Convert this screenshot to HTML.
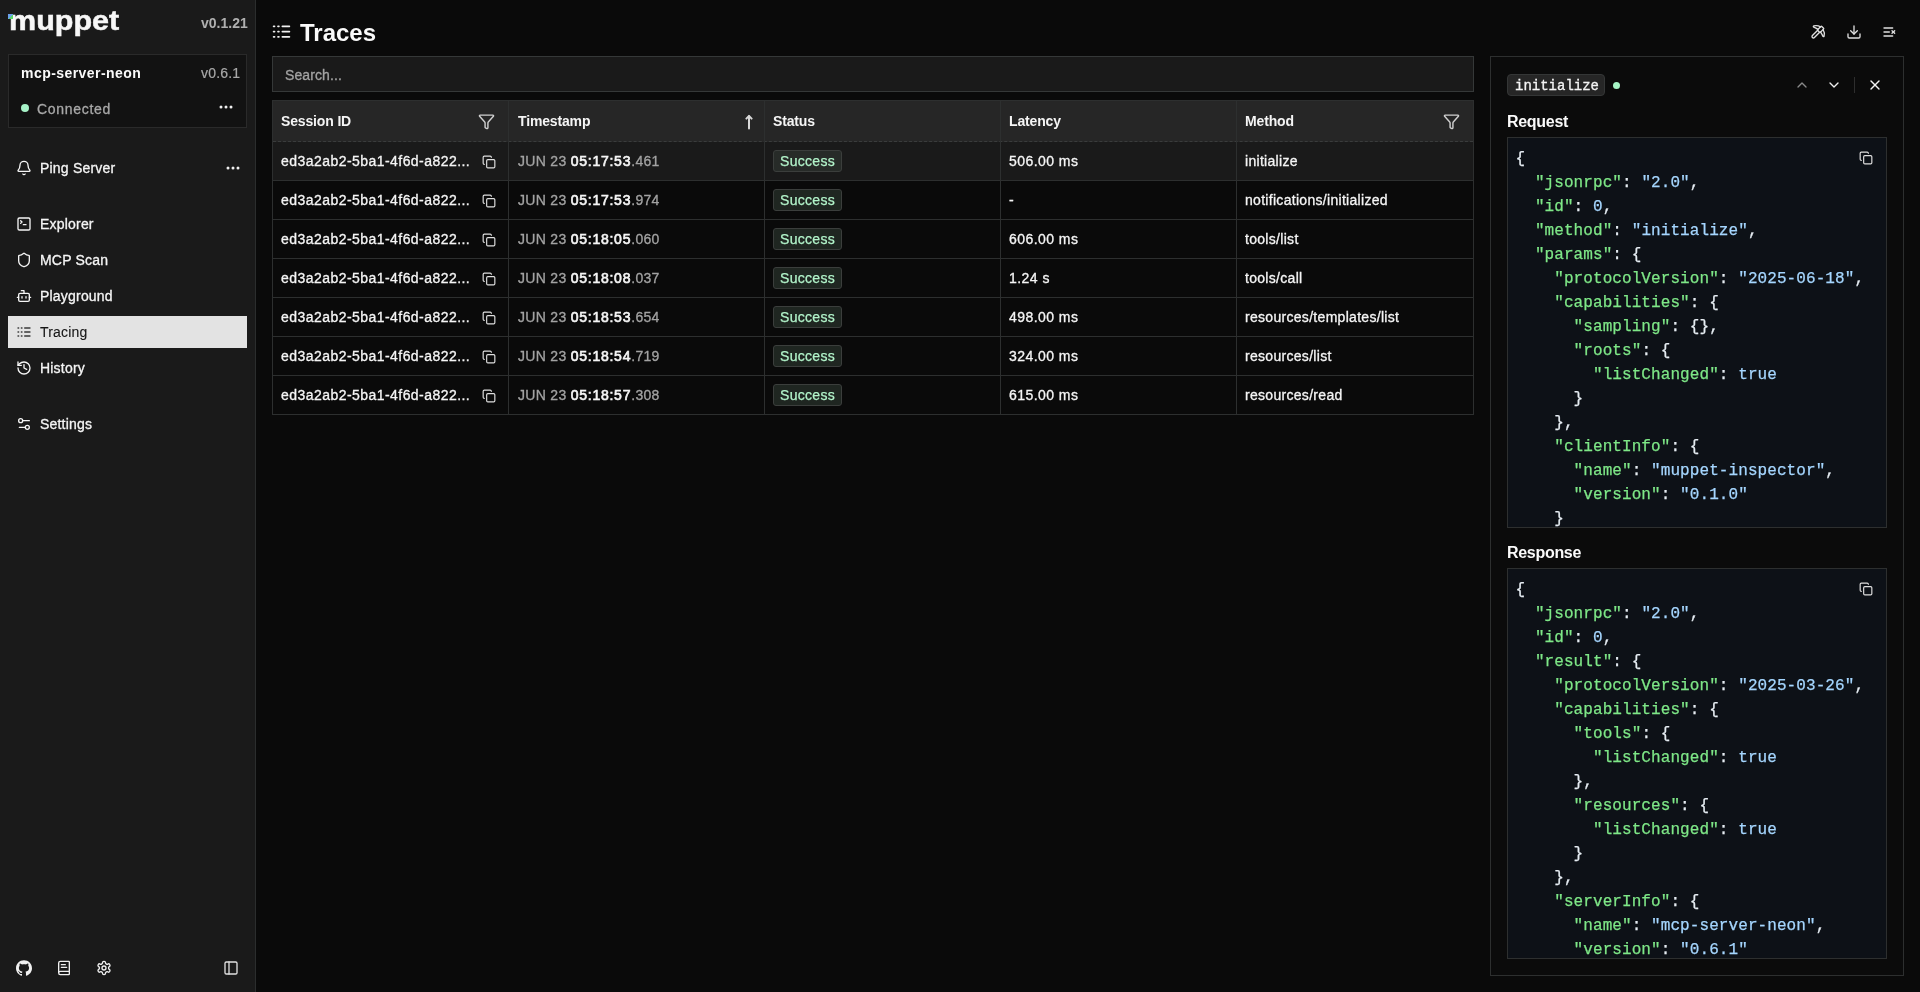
<!DOCTYPE html><html><head><meta charset="utf-8"><style>
*{box-sizing:border-box;margin:0;padding:0}
html,body{width:1920px;height:992px;overflow:hidden;background:#0a0a0a;font-family:"Liberation Sans",sans-serif;color:#f5f5f5}
.a{position:absolute}
svg.i{position:absolute;fill:none;stroke:currentColor;stroke-width:2;stroke-linecap:round;stroke-linejoin:round}
#side{position:absolute;left:0;top:0;width:256px;height:992px;background:#1a1a1a;border-right:1px solid #2b2d2d}
.logo{position:absolute;left:9px;top:6px;font-size:27px;font-weight:bold;letter-spacing:0px;color:#f7f7f7;transform-origin:0 0;transform:scaleX(1.13);-webkit-text-stroke:0.5px #f7f7f7}
.ver{position:absolute;left:201px;top:15px;font-size:14px;font-weight:bold;color:#b0b0b0}
.card{position:absolute;left:8px;top:54px;width:239px;height:74px;background:#121212;border:1px solid #2a2a2a}
.nav{position:absolute;left:8px;width:239px;height:32px;font-size:14px;color:#f5f5f5}
.nav .t{position:absolute;left:32px;top:8px;letter-spacing:0.2px;-webkit-text-stroke:0.3px currentColor}
.nav svg.i{left:8px;top:8px;width:16px;height:16px}
.nav.act{background:#e3e3e3;color:#161616}
.nav.act .t{-webkit-text-stroke:0.1px currentColor}
.nav.act svg.i{color:#3a3a3a}
.row.sel .badge{background:#272b28}
.search{position:absolute;left:272px;top:56px;width:1202px;height:36px;background:#1a1a1a;border:1px solid #353838;font-size:14px;color:#a3a3a3;padding:10px 12px;letter-spacing:0.1px;-webkit-text-stroke:0.3px currentColor}
.tbl{position:absolute;left:272px;top:100px;width:1202px;height:315px;border:1px solid #2d2f2f;font-size:14px}
.hdr{position:absolute;left:0;top:0;width:1200px;height:41px;background:#262626;border-bottom:1px dashed #3a3c3c}
.row{position:absolute;left:0;width:1200px;height:39px;border-bottom:1px solid #2d2f2f}
.row.sel{background:#1a1a1a}
.c{position:absolute;top:0;height:100%}
.vl{position:absolute;top:0;width:1px;height:313px;background:#2d2f2f}
.ht{position:absolute;top:12px;font-weight:bold;color:#f5f5f5;letter-spacing:-0.15px}
.tt b{font-weight:normal;-webkit-text-stroke:0.65px currentColor;letter-spacing:0.75px}
.tt{position:absolute;top:11px;color:#f5f5f5;letter-spacing:0.45px;white-space:nowrap;-webkit-text-stroke:0.3px currentColor}
.dim{color:#a3a3a3}
.badge{position:absolute;left:500px;top:8px;height:22px;width:69px;background:#1f2621;color:#b2f4ca;border:1px solid #3b3e3c;border-radius:3px;font-size:14px;line-height:20px;padding-left:6px;letter-spacing:0.3px;-webkit-text-stroke:0.25px currentColor}
.panel{position:absolute;left:1490px;top:56px;width:414px;height:920px;border:1px solid #2d2f2f;background:#0b0b0b}
.code{position:absolute;left:16px;width:380px;height:391px;background:#0d1117;border:1px solid #2d2f2f;font-family:"Liberation Mono",monospace;font-size:16px;line-height:24px;padding:9px 0 0 7.5px;overflow:hidden;white-space:pre;color:#e6edf3;letter-spacing:0.08px;-webkit-text-stroke:0.25px currentColor}
.k{color:#7ee787}.s{color:#a5d6ff}
.lbl{position:absolute;left:16px;font-size:16px;font-weight:bold;color:#fafafa;letter-spacing:-0.3px}
</style></head><body><div id="wrap" style="position:absolute;left:0;top:0;width:1920px;height:992px;will-change:transform">
<div id="side">
<div class="logo">muppet</div>
<div class="a" style="left:8px;top:14px;width:5px;height:5px;background:linear-gradient(135deg,#6aa0e8 50%,#5ad46a 50%)"></div>
<div class="ver">v0.1.21</div>
<div class="card"><div class="a" style="left:12px;top:10px;font-size:14px;font-weight:bold;color:#fafafa;letter-spacing:0.45px">mcp-server-neon</div><div class="a" style="left:192px;top:10px;font-size:14px;color:#a8a8a8;letter-spacing:0.2px;-webkit-text-stroke:0.2px currentColor">v0.6.1</div><div class="a" style="left:12px;top:49px;width:8px;height:8px;border-radius:50%;background:#a7f3c8"></div><div class="a" style="left:28px;top:46px;font-size:14px;color:#a8a8a8;letter-spacing:0.7px;-webkit-text-stroke:0.3px currentColor">Connected</div><svg class="a" style="left:210px;top:50px;width:14px;height:4px" viewBox="0 0 14 4"><circle cx="2" cy="2" r="1.5" fill="#f0f0f0"/><circle cx="7" cy="2" r="1.5" fill="#f0f0f0"/><circle cx="12" cy="2" r="1.5" fill="#f0f0f0"/></svg></div>
<div class="nav" style="top:152px"><svg class="i" style="left:8px;top:8px;width:16px;height:16px;" viewBox="0 0 24 24" stroke-width="2"><path d="M10.268 21a2 2 0 0 0 3.464 0"/><path d="M3.262 15.326A1 1 0 0 0 4 17h16a1 1 0 0 0 .74-1.673C19.41 13.956 18 12.499 18 8A6 6 0 0 0 6 8c0 4.499-1.411 5.956-2.738 7.326"/></svg><div class="t">Ping Server</div><svg class="a" style="left:218px;top:14px;width:14px;height:4px" viewBox="0 0 14 4"><circle cx="2" cy="2" r="1.5" fill="#f0f0f0"/><circle cx="7" cy="2" r="1.5" fill="#f0f0f0"/><circle cx="12" cy="2" r="1.5" fill="#f0f0f0"/></svg></div>
<div class="nav" style="top:208px"><svg class="i" style="left:8px;top:8px;width:16px;height:16px;" viewBox="0 0 24 24" stroke-width="2"><path d="m7 11 2-2-2-2"/><path d="M11 13h4"/><rect width="18" height="18" x="3" y="3" rx="2" ry="2"/></svg><div class="t">Explorer</div></div>
<div class="nav" style="top:244px"><svg class="i" style="left:8px;top:8px;width:16px;height:16px;" viewBox="0 0 24 24" stroke-width="2"><path d="M20 13c0 5-3.5 7.5-7.66 8.95a1 1 0 0 1-.67-.01C7.5 20.5 4 18 4 13V6a1 1 0 0 1 1-1c2 0 4.5-1.2 6.24-2.72a1.17 1.17 0 0 1 1.52 0C14.51 3.81 17 5 19 5a1 1 0 0 1 1 1z"/></svg><div class="t">MCP Scan</div></div>
<div class="nav" style="top:280px"><svg class="i" style="left:8px;top:8px;width:16px;height:16px;" viewBox="0 0 24 24" stroke-width="2"><path d="M12 8V4H8"/><rect width="16" height="12" x="4" y="8" rx="2"/><path d="M2 14h2"/><path d="M20 14h2"/><path d="M15 13v2"/><path d="M9 13v2"/></svg><div class="t">Playground</div></div>
<div class="nav act" style="top:316px"><svg class="i" style="left:8px;top:8px;width:16px;height:16px;" viewBox="0 0 24 24" stroke-width="2"><path d="M13 12h8"/><path d="M13 18h8"/><path d="M13 6h8"/><path d="M3 12h1"/><path d="M3 18h1"/><path d="M3 6h1"/><path d="M8 12h1"/><path d="M8 18h1"/><path d="M8 6h1"/></svg><div class="t">Tracing</div></div>
<div class="nav" style="top:352px"><svg class="i" style="left:8px;top:8px;width:16px;height:16px;" viewBox="0 0 24 24" stroke-width="2"><path d="M3 12a9 9 0 1 0 9-9 9.75 9.75 0 0 0-6.74 2.74L3 8"/><path d="M3 3v5h5"/><path d="M12 7v5l4 2"/></svg><div class="t">History</div></div>
<div class="nav" style="top:408px"><svg class="i" style="left:8px;top:8px;width:16px;height:16px;" viewBox="0 0 24 24" stroke-width="2"><path d="M20 7h-9"/><path d="M14 17H5"/><circle cx="17" cy="17" r="3"/><circle cx="7" cy="7" r="3"/></svg><div class="t">Settings</div></div>
<svg class="i" style="left:16px;top:960px;width:16px;height:16px;color:#f0f0f0;fill:#f0f0f0;stroke:none;" viewBox="0 0 24 24" stroke-width="0"><path d="M12 .5C5.37.5 0 5.78 0 12.292c0 5.211 3.438 9.63 8.205 11.188.6.111.82-.254.82-.567 0-.28-.01-1.022-.015-2.005-3.338.711-4.042-1.582-4.042-1.582-.546-1.361-1.335-1.725-1.335-1.725-1.087-.731.084-.716.084-.716 1.205.082 1.838 1.215 1.838 1.215 1.07 1.803 2.809 1.282 3.495.981.108-.763.417-1.282.76-1.577-2.665-.295-5.466-1.309-5.466-5.827 0-1.287.465-2.339 1.235-3.164-.135-.298-.54-1.497.105-3.121 0 0 1.005-.316 3.3 1.209.96-.262 1.98-.392 3-.398 1.02.006 2.04.136 3 .398 2.28-1.525 3.285-1.209 3.285-1.209.645 1.624.24 2.823.12 3.121.765.825 1.23 1.877 1.23 3.164 0 4.53-2.805 5.527-5.475 5.817.42.354.81 1.077.81 2.196 0 1.587-.015 2.862-.015 3.248 0 .309.21.678.825.56C20.565 21.917 24 17.495 24 12.292 24 5.78 18.627.5 12 .5z"/></svg>
<svg class="i" style="left:56px;top:960px;width:16px;height:16px;color:#f0f0f0;" viewBox="0 0 24 24" stroke-width="2"><path d="M4 19.5v-15A2.5 2.5 0 0 1 6.5 2H19a1 1 0 0 1 1 1v18a1 1 0 0 1-1 1H6.5a1 1 0 0 1 0-5H20"/><path d="M8 11h8"/><path d="M8 7h6"/></svg>
<svg class="i" style="left:96px;top:960px;width:16px;height:16px;color:#f0f0f0;" viewBox="0 0 24 24" stroke-width="2"><path d="M12.22 2h-.44a2 2 0 0 0-2 2v.18a2 2 0 0 1-1 1.73l-.43.25a2 2 0 0 1-2 0l-.15-.08a2 2 0 0 0-2.73.73l-.22.38a2 2 0 0 0 .73 2.73l.15.1a2 2 0 0 1 1 1.72v.51a2 2 0 0 1-1 1.74l-.15.09a2 2 0 0 0-.73 2.73l.22.38a2 2 0 0 0 2.73.73l.15-.08a2 2 0 0 1 2 0l.43.25a2 2 0 0 1 1 1.73V20a2 2 0 0 0 2 2h.44a2 2 0 0 0 2-2v-.18a2 2 0 0 1 1-1.73l.43-.25a2 2 0 0 1 2 0l.15.08a2 2 0 0 0 2.73-.73l.22-.39a2 2 0 0 0-.73-2.73l-.15-.08a2 2 0 0 1-1-1.74v-.5a2 2 0 0 1 1-1.74l.15-.09a2 2 0 0 0 .73-2.73l-.22-.38a2 2 0 0 0-2.73-.73l-.15.08a2 2 0 0 1-2 0l-.43-.25a2 2 0 0 1-1-1.73V4a2 2 0 0 0-2-2z"/><circle cx="12" cy="12" r="3"/></svg>
<svg class="i" style="left:223px;top:960px;width:16px;height:16px;color:#e0e0e0;" viewBox="0 0 24 24" stroke-width="2"><rect width="18" height="18" x="3" y="3" rx="2"/><path d="M9 3v18"/></svg>
</div>
<svg class="i" style="left:271px;top:21px;width:21px;height:21px;color:#f0f0f0;" viewBox="0 0 24 24" stroke-width="2"><path d="M13 12h8"/><path d="M13 18h8"/><path d="M13 6h8"/><path d="M3 12h1"/><path d="M3 18h1"/><path d="M3 6h1"/><path d="M8 12h1"/><path d="M8 18h1"/><path d="M8 6h1"/></svg>
<div class="a" style="left:300px;top:19px;font-size:24px;font-weight:bold;color:#fafafa">Traces</div>
<svg class="i" style="left:1810px;top:24px;width:16px;height:16px;color:#e0e0e0;" viewBox="0 0 24 24" stroke-width="2"><path d="M14.531 12.469 6.619 20.38a1 1 0 1 1-3-3l7.912-7.912"/><path d="M15.686 4.314A12.5 12.5 0 0 0 5.461 2.958 1 1 0 0 0 5.58 4.71a22 22 0 0 1 6.318 3.393"/><path d="M17.7 3.7a1 1 0 0 0-1.4 0l-4.6 4.6a1 1 0 0 0 0 1.4l2.6 2.6a1 1 0 0 0 1.4 0l4.6-4.6a1 1 0 0 0 0-1.4z"/><path d="M19.686 8.314a12.501 12.501 0 0 1 1.356 10.225 1 1 0 0 1-1.751-.119 22 22 0 0 0-3.393-6.319"/></svg>
<svg class="i" style="left:1846px;top:24px;width:16px;height:16px;color:#e0e0e0;" viewBox="0 0 24 24" stroke-width="2"><path d="M21 15v4a2 2 0 0 1-2 2H5a2 2 0 0 1-2-2v-4"/><polyline points="7 10 12 15 17 10"/><line x1="12" x2="12" y1="15" y2="3"/></svg>
<svg class="i" style="left:1882px;top:24px;width:16px;height:16px;color:#e0e0e0;" viewBox="0 0 24 24" stroke-width="2"><path d="M11 12H3"/><path d="M16 6H3"/><path d="M16 18H3"/><path d="m19 10-4 4"/><path d="m15 10 4 4"/></svg>
<div class="search">Search...</div>
<div class="tbl">
<div class="hdr"><div class="ht" style="left:8px">Session ID</div><svg class="i" style="left:205px;top:12px;width:17px;height:17px;color:#d0d0d0;" viewBox="0 0 24 24" stroke-width="2"><path d="M10 20a1 1 0 0 0 .553.895l2 1A1 1 0 0 0 14 21v-7a2 2 0 0 1 .517-1.341L21.74 4.67A1 1 0 0 0 21 3H3a1 1 0 0 0-.742 1.67l7.225 7.989A2 2 0 0 1 10 14z"/></svg><div class="ht" style="left:245px">Timestamp</div><svg class="i" style="left:472px;top:11px;width:8px;height:18px;color:#d8d8d8" viewBox="0 0 8 18" stroke-width="1.5"><path d="M4 4.2V16.6"/><path d="M1.4 6.6 4 3.9 6.6 6.6"/></svg><div class="ht" style="left:500px">Status</div><div class="ht" style="left:736px">Latency</div><div class="ht" style="left:972px">Method</div><svg class="i" style="left:1170px;top:12px;width:17px;height:17px;color:#d0d0d0;" viewBox="0 0 24 24" stroke-width="2"><path d="M10 20a1 1 0 0 0 .553.895l2 1A1 1 0 0 0 14 21v-7a2 2 0 0 1 .517-1.341L21.74 4.67A1 1 0 0 0 21 3H3a1 1 0 0 0-.742 1.67l7.225 7.989A2 2 0 0 1 10 14z"/></svg></div>
<div class="row sel" style="top:41px"><div class="tt" style="left:8px">ed3a2ab2-5ba1-4f6d-a822...</div><svg class="i" style="left:209px;top:13px;width:14px;height:14px;color:#e0e0e0;" viewBox="0 0 24 24" stroke-width="2"><rect width="14" height="14" x="8" y="8" rx="2" ry="2"/><path d="M4 16c-1.1 0-2-.9-2-2V4c0-1.1.9-2 2-2h10c1.1 0 2 .9 2 2"/></svg><div class="tt" style="left:245px;letter-spacing:0.3px"><span class="dim">JUN 23</span> <b>05:17:53</b><span class="dim">.461</span></div><div class="badge">Success</div><div class="tt" style="left:736px">506.00 ms</div><div class="tt" style="left:972px;letter-spacing:0.3px">initialize</div></div>
<div class="row" style="top:80px"><div class="tt" style="left:8px">ed3a2ab2-5ba1-4f6d-a822...</div><svg class="i" style="left:209px;top:13px;width:14px;height:14px;color:#e0e0e0;" viewBox="0 0 24 24" stroke-width="2"><rect width="14" height="14" x="8" y="8" rx="2" ry="2"/><path d="M4 16c-1.1 0-2-.9-2-2V4c0-1.1.9-2 2-2h10c1.1 0 2 .9 2 2"/></svg><div class="tt" style="left:245px;letter-spacing:0.3px"><span class="dim">JUN 23</span> <b>05:17:53</b><span class="dim">.974</span></div><div class="badge">Success</div><div class="tt" style="left:736px">-</div><div class="tt" style="left:972px;letter-spacing:0.3px">notifications/initialized</div></div>
<div class="row" style="top:119px"><div class="tt" style="left:8px">ed3a2ab2-5ba1-4f6d-a822...</div><svg class="i" style="left:209px;top:13px;width:14px;height:14px;color:#e0e0e0;" viewBox="0 0 24 24" stroke-width="2"><rect width="14" height="14" x="8" y="8" rx="2" ry="2"/><path d="M4 16c-1.1 0-2-.9-2-2V4c0-1.1.9-2 2-2h10c1.1 0 2 .9 2 2"/></svg><div class="tt" style="left:245px;letter-spacing:0.3px"><span class="dim">JUN 23</span> <b>05:18:05</b><span class="dim">.060</span></div><div class="badge">Success</div><div class="tt" style="left:736px">606.00 ms</div><div class="tt" style="left:972px;letter-spacing:0.3px">tools/list</div></div>
<div class="row" style="top:158px"><div class="tt" style="left:8px">ed3a2ab2-5ba1-4f6d-a822...</div><svg class="i" style="left:209px;top:13px;width:14px;height:14px;color:#e0e0e0;" viewBox="0 0 24 24" stroke-width="2"><rect width="14" height="14" x="8" y="8" rx="2" ry="2"/><path d="M4 16c-1.1 0-2-.9-2-2V4c0-1.1.9-2 2-2h10c1.1 0 2 .9 2 2"/></svg><div class="tt" style="left:245px;letter-spacing:0.3px"><span class="dim">JUN 23</span> <b>05:18:08</b><span class="dim">.037</span></div><div class="badge">Success</div><div class="tt" style="left:736px">1.24 s</div><div class="tt" style="left:972px;letter-spacing:0.3px">tools/call</div></div>
<div class="row" style="top:197px"><div class="tt" style="left:8px">ed3a2ab2-5ba1-4f6d-a822...</div><svg class="i" style="left:209px;top:13px;width:14px;height:14px;color:#e0e0e0;" viewBox="0 0 24 24" stroke-width="2"><rect width="14" height="14" x="8" y="8" rx="2" ry="2"/><path d="M4 16c-1.1 0-2-.9-2-2V4c0-1.1.9-2 2-2h10c1.1 0 2 .9 2 2"/></svg><div class="tt" style="left:245px;letter-spacing:0.3px"><span class="dim">JUN 23</span> <b>05:18:53</b><span class="dim">.654</span></div><div class="badge">Success</div><div class="tt" style="left:736px">498.00 ms</div><div class="tt" style="left:972px;letter-spacing:0.3px">resources/templates/list</div></div>
<div class="row" style="top:236px"><div class="tt" style="left:8px">ed3a2ab2-5ba1-4f6d-a822...</div><svg class="i" style="left:209px;top:13px;width:14px;height:14px;color:#e0e0e0;" viewBox="0 0 24 24" stroke-width="2"><rect width="14" height="14" x="8" y="8" rx="2" ry="2"/><path d="M4 16c-1.1 0-2-.9-2-2V4c0-1.1.9-2 2-2h10c1.1 0 2 .9 2 2"/></svg><div class="tt" style="left:245px;letter-spacing:0.3px"><span class="dim">JUN 23</span> <b>05:18:54</b><span class="dim">.719</span></div><div class="badge">Success</div><div class="tt" style="left:736px">324.00 ms</div><div class="tt" style="left:972px;letter-spacing:0.3px">resources/list</div></div>
<div class="row" style="top:275px"><div class="tt" style="left:8px">ed3a2ab2-5ba1-4f6d-a822...</div><svg class="i" style="left:209px;top:13px;width:14px;height:14px;color:#e0e0e0;" viewBox="0 0 24 24" stroke-width="2"><rect width="14" height="14" x="8" y="8" rx="2" ry="2"/><path d="M4 16c-1.1 0-2-.9-2-2V4c0-1.1.9-2 2-2h10c1.1 0 2 .9 2 2"/></svg><div class="tt" style="left:245px;letter-spacing:0.3px"><span class="dim">JUN 23</span> <b>05:18:57</b><span class="dim">.308</span></div><div class="badge">Success</div><div class="tt" style="left:736px">615.00 ms</div><div class="tt" style="left:972px;letter-spacing:0.3px">resources/read</div></div>
<div class="vl" style="left:235px;top:0"></div>
<div class="vl" style="left:491px;top:0"></div>
<div class="vl" style="left:727px;top:0"></div>
<div class="vl" style="left:963px;top:0"></div>
</div>
<div class="panel">
<div class="a" style="left:16px;top:17px;width:98px;height:22px;padding:0 0 0 7px;background:#262626;border:1px solid #343636;border-radius:4px;font-family:'Liberation Mono',monospace;font-size:14px;line-height:22px;color:#f5f5f5;-webkit-text-stroke:0.3px currentColor">initialize</div>
<div class="a" style="left:122px;top:25px;width:7px;height:7px;border-radius:50%;background:#a6f4c5"></div>
<svg class="i" style="left:303px;top:20px;width:16px;height:16px;color:#8a8a8a;" viewBox="0 0 24 24" stroke-width="2"><path d="m18 15-6-6-6 6"/></svg>
<svg class="i" style="left:335px;top:20px;width:16px;height:16px;color:#f0f0f0;" viewBox="0 0 24 24" stroke-width="2"><path d="m6 9 6 6 6-6"/></svg>
<div class="a" style="left:363px;top:20px;width:1px;height:16px;background:#2e2e2e"></div>
<svg class="i" style="left:376px;top:20px;width:16px;height:16px;color:#f5f5f5;" viewBox="0 0 24 24" stroke-width="2"><path d="M18 6 6 18"/><path d="m6 6 12 12"/></svg>
<div class="lbl" style="top:56px">Request</div>
<div class="code" style="top:80px">{
  <span class="k">"jsonrpc"</span>: <span class="s">"2.0"</span>,
  <span class="k">"id"</span>: <span class="s">0</span>,
  <span class="k">"method"</span>: <span class="s">"initialize"</span>,
  <span class="k">"params"</span>: {
    <span class="k">"protocolVersion"</span>: <span class="s">"2025-06-18"</span>,
    <span class="k">"capabilities"</span>: {
      <span class="k">"sampling"</span>: {},
      <span class="k">"roots"</span>: {
        <span class="k">"listChanged"</span>: <span class="s">true</span>
      }
    },
    <span class="k">"clientInfo"</span>: {
      <span class="k">"name"</span>: <span class="s">"muppet-inspector"</span>,
      <span class="k">"version"</span>: <span class="s">"0.1.0"</span>
    }
  }
}</div>
<svg class="i" style="left:368px;top:94px;width:14px;height:14px;color:#e0e0e0;" viewBox="0 0 24 24" stroke-width="2"><rect width="14" height="14" x="8" y="8" rx="2" ry="2"/><path d="M4 16c-1.1 0-2-.9-2-2V4c0-1.1.9-2 2-2h10c1.1 0 2 .9 2 2"/></svg>
<div class="lbl" style="top:487px">Response</div>
<div class="code" style="top:511px">{
  <span class="k">"jsonrpc"</span>: <span class="s">"2.0"</span>,
  <span class="k">"id"</span>: <span class="s">0</span>,
  <span class="k">"result"</span>: {
    <span class="k">"protocolVersion"</span>: <span class="s">"2025-03-26"</span>,
    <span class="k">"capabilities"</span>: {
      <span class="k">"tools"</span>: {
        <span class="k">"listChanged"</span>: <span class="s">true</span>
      },
      <span class="k">"resources"</span>: {
        <span class="k">"listChanged"</span>: <span class="s">true</span>
      }
    },
    <span class="k">"serverInfo"</span>: {
      <span class="k">"name"</span>: <span class="s">"mcp-server-neon"</span>,
      <span class="k">"version"</span>: <span class="s">"0.6.1"</span>
    }
  }
}</div>
<svg class="i" style="left:368px;top:525px;width:14px;height:14px;color:#e0e0e0;" viewBox="0 0 24 24" stroke-width="2"><rect width="14" height="14" x="8" y="8" rx="2" ry="2"/><path d="M4 16c-1.1 0-2-.9-2-2V4c0-1.1.9-2 2-2h10c1.1 0 2 .9 2 2"/></svg>
</div>
</div></body></html>
